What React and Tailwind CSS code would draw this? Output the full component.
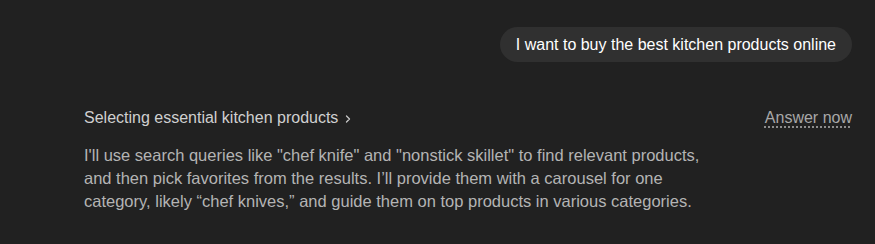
export default function App() {
  return (
    <div
      className="w-[875px] h-[244px] bg-[#212121] overflow-hidden"
      style={{ fontFamily: '"Liberation Sans", Arial, sans-serif' }}
    >
      <div className="flex justify-end pt-[27px] pr-[23px]">
        <div className="bg-[#303030] text-white text-[16px] leading-[35px] h-[35px] px-[16px] rounded-full">
          I want to buy the best kitchen products online
        </div>
      </div>

      <div className="flex items-center justify-between pl-[84px] pr-[23px] mt-[45px]">
        <button className="flex items-center gap-[6px] text-[16px] text-[#d0d0d0] leading-[22px]">
          Selecting essential kitchen products
          <svg width="8" height="10" viewBox="0 0 8 10" fill="none" className="mt-[1px]">
            <path d="M2.5 2 L5.5 5 L2.5 8" stroke="#c8c8c8" strokeWidth="1.3" strokeLinecap="round" strokeLinejoin="round" />
          </svg>
        </button>
        <button className="text-[16px] text-[#a8a8a8] leading-[22px] underline decoration-dotted underline-offset-[4px]">
          Answer now
        </button>
      </div>

      <p className="pl-[84px] mt-[15px] w-[714px] text-[16.5px] leading-[23px] text-[#b4b4b4]">
        I'll use search queries like "chef knife" and "nonstick skillet" to find relevant products,
        and then pick favorites from the results. I’ll provide them with a carousel for one
        category, likely “chef knives,” and guide them on top products in various categories.
      </p>
    </div>
  );
}
